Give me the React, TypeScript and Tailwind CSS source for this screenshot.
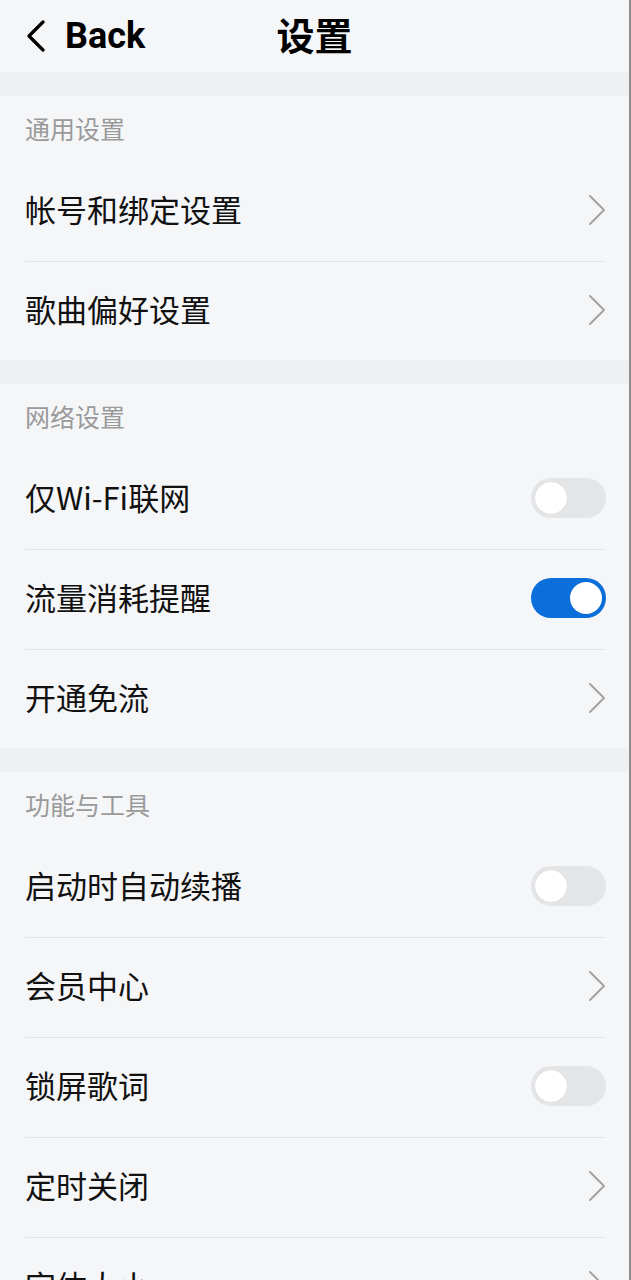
import React from "react";

type Row =
  | { label: string; kind: "arrow" }
  | { label: string; kind: "toggle"; on: boolean };

const sections: { title: string; rows: Row[] }[] = [
  {
    title: "通用设置",
    rows: [
      { label: "帐号和绑定设置", kind: "arrow" },
      { label: "歌曲偏好设置", kind: "arrow" },
    ],
  },
  {
    title: "网络设置",
    rows: [
      { label: "仅Wi-Fi联网", kind: "toggle", on: false },
      { label: "流量消耗提醒", kind: "toggle", on: true },
      { label: "开通免流", kind: "arrow" },
    ],
  },
  {
    title: "功能与工具",
    rows: [
      { label: "启动时自动续播", kind: "toggle", on: false },
      { label: "会员中心", kind: "arrow" },
      { label: "锁屏歌词", kind: "toggle", on: false },
      { label: "定时关闭", kind: "arrow" },
      { label: "字体大小", kind: "arrow" },
    ],
  },
];

function Chevron() {
  return (
    <svg width="18" height="32" viewBox="0 0 18 32" fill="none">
      <path d="M2 2 L16 16 L2 30" stroke="#a3a3a3" strokeWidth="2" strokeLinecap="round" strokeLinejoin="round" />
    </svg>
  );
}

function Toggle({ on }: { on: boolean }) {
  return (
    <div
      className={
        on
          ? "w-[75px] h-[40px] rounded-full bg-[#0a6fdb] flex items-center justify-end px-[4px]"
          : "w-[75px] h-[40px] rounded-full bg-[#e4e5e7] flex items-center justify-start px-[4px]"
      }
    >
      <div className="w-[32px] h-[32px] rounded-full bg-white shadow-[0_0_1px_rgba(0,0,0,0.15)]" />
    </div>
  );
}

export default function App() {
  const font = { fontFamily: '"Noto Sans CJK SC", "Noto Sans", sans-serif' };
  return (
    <div className="w-[631px] h-[1280px] overflow-hidden bg-[#f5f6f8] border-r-2 border-[#8e8e8e]" style={font}>
      {/* Header */}
      <div className="relative h-[72px] flex items-center">
        <div className="flex items-center pl-[26px] gap-[20px]">
          <svg width="19" height="32" viewBox="0 0 19 32" fill="none">
            <path d="M17 2 L3 16 L17 30" stroke="#000" strokeWidth="3.2" strokeLinecap="round" strokeLinejoin="round" />
          </svg>
          <span className="text-[36px] font-bold text-black leading-none" style={{ fontFamily: "Roboto, sans-serif" }}>
            Back
          </span>
        </div>
        <div className="absolute left-0 right-0 top-0 h-[72px] flex items-center justify-center pointer-events-none">
          <span className="text-[38px] font-bold text-black leading-none -mt-[4px]">设置</span>
        </div>
      </div>

      {sections.map((s) => (
        <div key={s.title}>
          <div className="h-[24px] bg-[#eff0f2]" />
          <div className="h-[66px] flex items-center px-[25px] pb-[2px]">
            <span className="text-[25px] text-[#9a9a9a] leading-none">{s.title}</span>
          </div>
          {s.rows.map((r, i) => (
            <div
              key={r.label}
              className={
                i < s.rows.length - 1
                  ? "ml-[25px] mr-[23px] h-[100px] border-b border-[#e4e5e7] flex items-center justify-between pb-[3px]"
                  : "ml-[25px] mr-[23px] h-[98px] flex items-center justify-between pb-[3px]"
              }
            >
              <span className="text-[31px] text-[#111] leading-none pb-[3px]">{r.label}</span>
              {r.kind === "arrow" ? <Chevron /> : <Toggle on={r.on} />}
            </div>
          ))}
        </div>
      ))}
    </div>
  );
}
